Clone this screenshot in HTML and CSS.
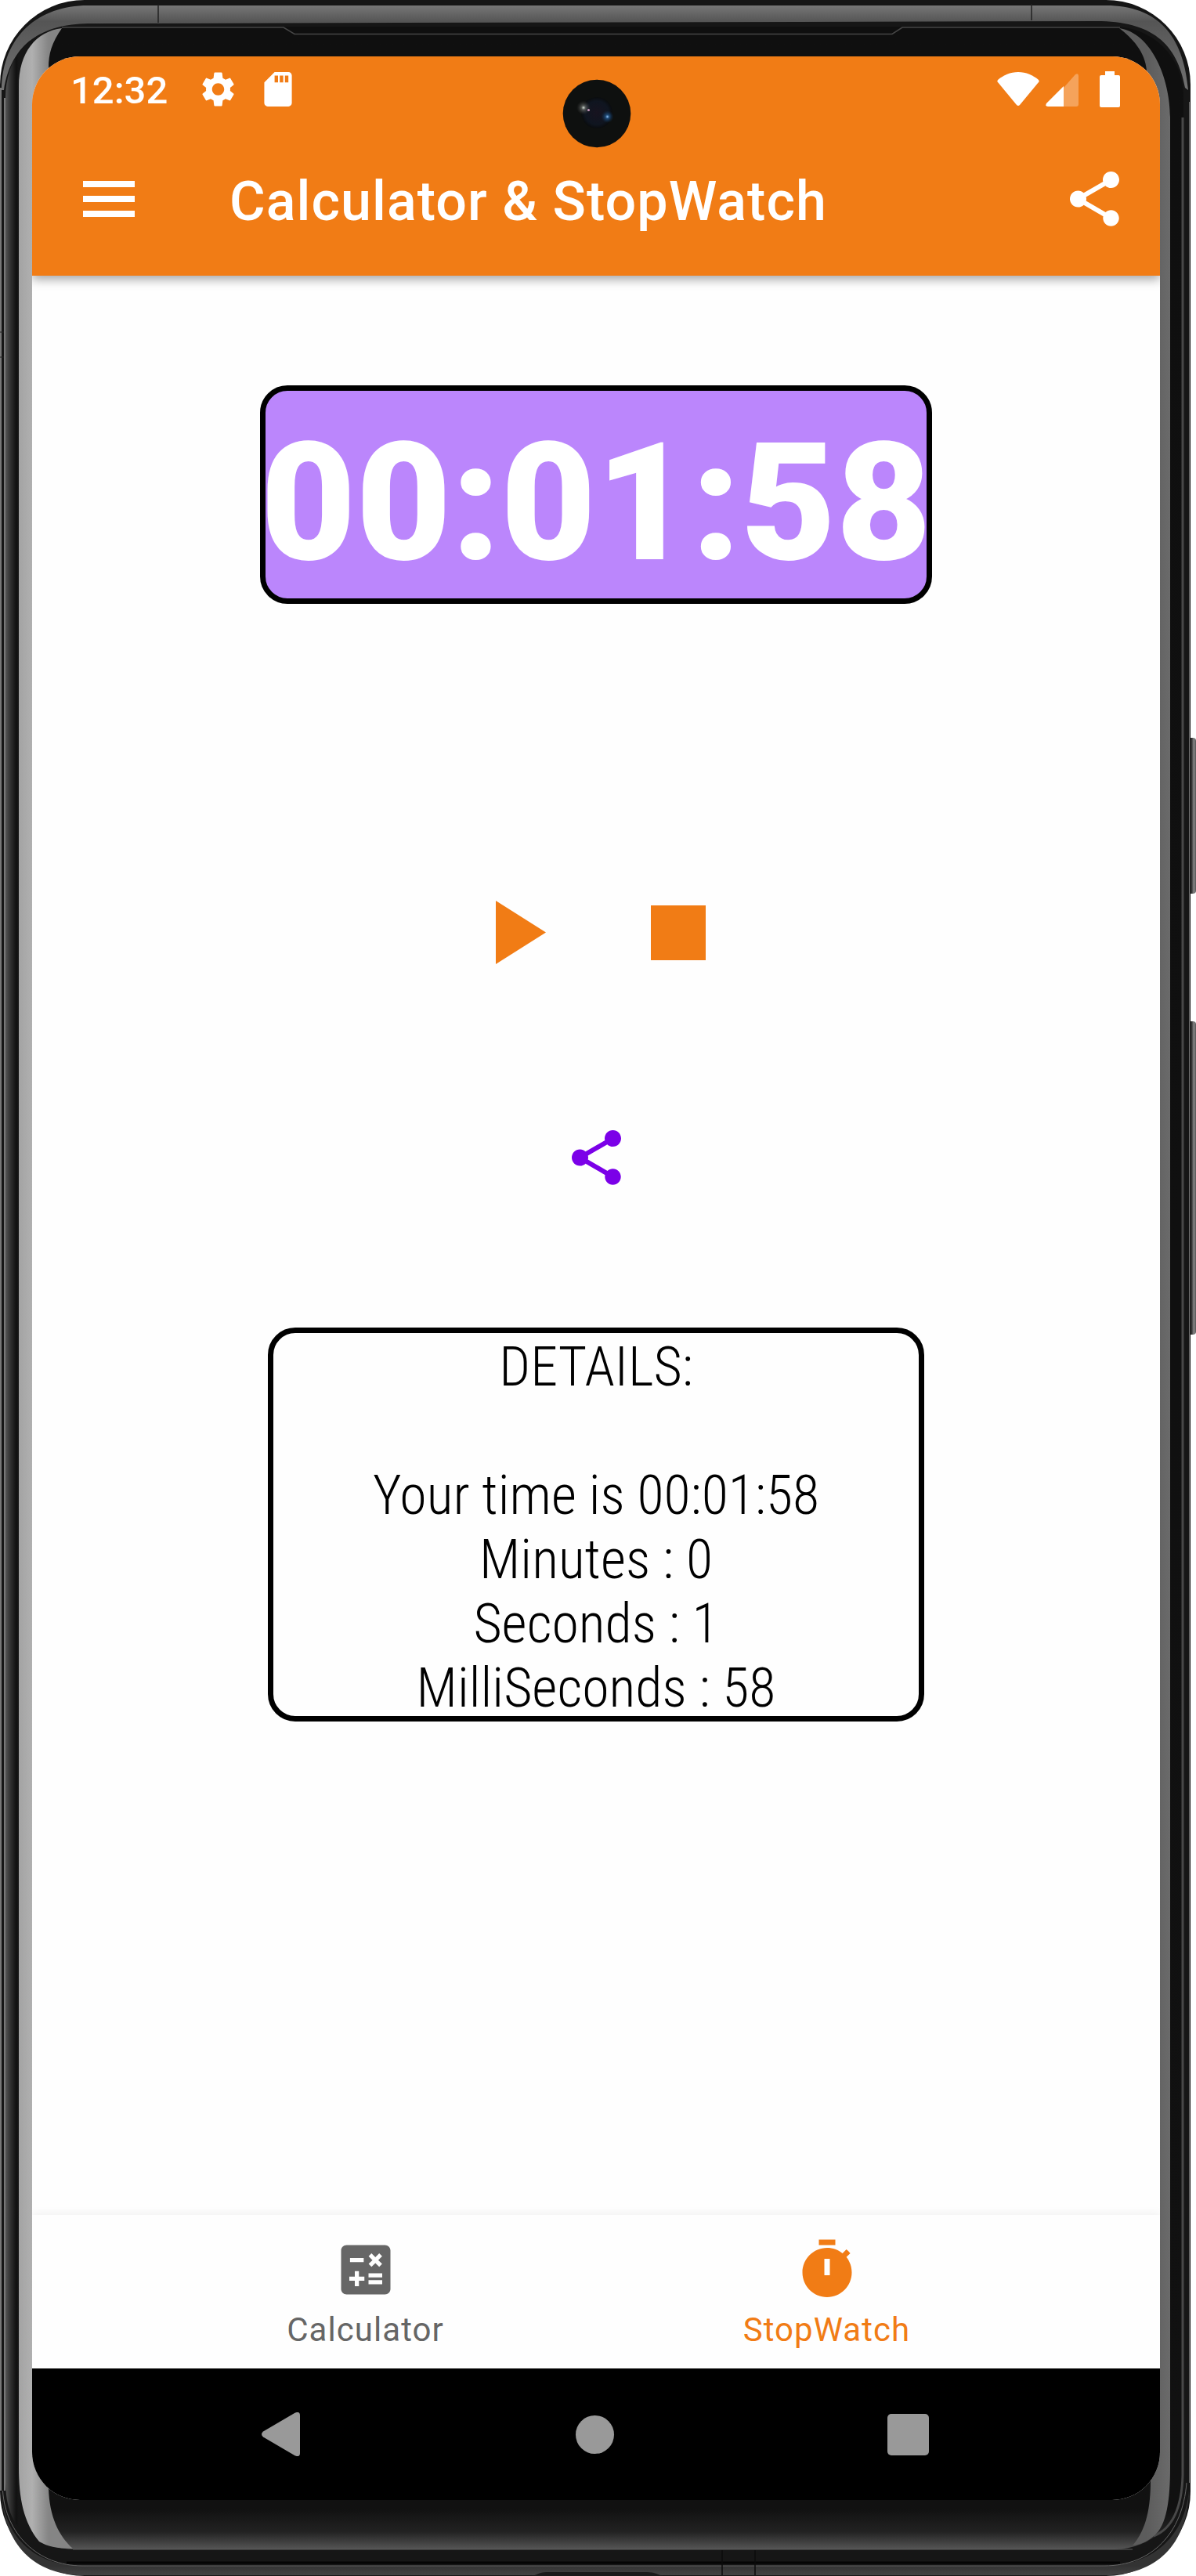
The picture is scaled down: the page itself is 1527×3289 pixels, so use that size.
FILE: index.html
```html
<!DOCTYPE html>
<html lang="en">
<head>
<meta charset="utf-8">
<title>Calculator &amp; StopWatch</title>
<link rel="stylesheet" href="styles.css">
</head>
<body>
<div class="phone">
  <svg class="frame" viewBox="0 0 1527 3289" aria-hidden="true">
    <defs>
      <linearGradient id="metalTop" gradientUnits="userSpaceOnUse" x1="0" y1="6" x2="0" y2="150">
        <stop offset="0" stop-color="#787878"/><stop offset=".15" stop-color="#555"/><stop offset=".5" stop-color="#666"/><stop offset="1" stop-color="#7c7c7c"/>
      </linearGradient>
      <linearGradient id="metalBottom" gradientUnits="userSpaceOnUse" x1="0" y1="3276" x2="0" y2="3289">
        <stop offset="0" stop-color="#333"/><stop offset="1" stop-color="#444"/>
      </linearGradient>
      <linearGradient id="glass" x1="0" y1="0" x2="0" y2="1">
        <stop offset="0" stop-color="#0f0f0f"/><stop offset=".984" stop-color="#111"/><stop offset=".993" stop-color="#222"/><stop offset="1" stop-color="#555"/>
      </linearGradient>
      <linearGradient id="leftEdge" gradientUnits="userSpaceOnUse" x1="7" y1="0" x2="24" y2="0">
        <stop offset="0" stop-color="#555"/><stop offset=".35" stop-color="#333"/><stop offset=".8" stop-color="#111"/><stop offset="1" stop-color="#161616"/>
      </linearGradient>
      <linearGradient id="leftShine" gradientUnits="userSpaceOnUse" x1="24" y1="0" x2="62" y2="0">
        <stop offset="0" stop-color="#a3a3a3"/><stop offset=".45" stop-color="#b0b0b0"/><stop offset="1" stop-color="#858585"/>
      </linearGradient>
      <linearGradient id="rightShine" gradientUnits="userSpaceOnUse" x1="1464" y1="0" x2="1495" y2="0">
        <stop offset="0" stop-color="#5c5c5c"/><stop offset="1" stop-color="#6b6b6b"/>
      </linearGradient>
      <linearGradient id="key" x1="0" y1="0" x2="1" y2="0">
        <stop offset="0" stop-color="#222"/><stop offset=".5" stop-color="#333"/><stop offset=".75" stop-color="#888"/><stop offset="1" stop-color="#555"/>
      </linearGradient>
    </defs>
    <rect x="1516" y="942" width="11" height="199" rx="4" fill="url(#key)"/>
    <rect x="1516" y="1304" width="11" height="400" rx="4" fill="url(#key)"/>
    <rect x="0" y="0" width="1520" height="3289" rx="108" fill="#161616"/>
    <path d="M2 115C3 45 50 7 112 7H1412C1478 7 1511 45 1517 115L1513 112C1503 55 1470 27 1400 27L112 30C55 31 14 55 5 115Z" fill="url(#metalTop)"/>
    <path d="M202 6V29M1317 5V26" stroke="#222" stroke-width="1.5"/>
    <path d="M1 112V3180M6 125V3180" fill="none" stroke="#777" stroke-width="2"/>
    <path d="M0 424H5M0 456H5" stroke="#222"/>
    <path d="M1518.500 130V3170" stroke="#777"/>
    <path d="M2 3180C5 3240 45 3276 105 3276H1410C1475 3276 1513 3235 1518 3180C1516 3250 1476 3288 1411 3288H106C45 3288 4 3250 2 3180Z" fill="url(#metalBottom)"/>
    <path d="M3.500 3180C7 3235 48 3276 105 3276H1410C1470 3276 1510 3235 1515 3170" fill="none" stroke="#666"/>
    <path d="M85 3272H1430" stroke="#050505" stroke-width="3"/>
    <path d="M677 3289C684 3289 688 3284 698 3284H826C836 3284 838 3287 848 3289Z" fill="#1a1a1a"/>
    <path d="M922 3256V3288M964 3256V3288" stroke="#0b0b0b" stroke-width="1.500"/>
    <rect x="7" y="34" width="1504" height="3221" rx="88" fill="url(#glass)"/>
    <path d="M7 125V3170C8 3210 20 3232 50 3245C30 3220 24 3190 24 3150V110C24 75 42 50 79 36C33 42 8 75 7 125Z" fill="url(#leftEdge)"/>
    <path d="M1510 150V3160C1509 3200 1498 3228 1473 3238" fill="none" stroke="#484848" stroke-width="3"/>
    <path d="M24 110C24 67 46 40 79 36C66 55 62 68 62 87V3177C63 3213 75 3238 93 3254C72 3254 60 3251 50 3245C30 3220 24 3190 24 3150Z" fill="url(#leftShine)"/>
    <path d="M1429 36C1470 42 1494 100 1494 150V3150C1494 3190 1490 3225 1473 3238C1466 3244 1457 3249 1446 3250C1464 3230 1469 3200 1469 3168L1464 90C1462 66 1446 49 1429 36Z" fill="url(#rightShine)"/>
    <path d="M79 35H362L376 43.500H1139L1152 35H1430" fill="none" stroke="#464646" stroke-width="1.500"/>
    <path d="M93 3255H1446" stroke="#5c5c5c"/>
  </svg>

  <main class="screen">
    <header class="top">
      <div class="status">
        <span class="clock">12:32</span>
        <svg class="gear" viewBox="2 2 20 20"><path d="M19.140 12.940c.04-.3.06-.61.06-.94 0-.32-.02-.64-.07-.94l2.030-1.580c.18-.14.23-.41.12-.61l-1.920-3.320c-.12-.22-.37-.29-.59-.22l-2.390.96c-.5-.38-1.030-.7-1.620-.94L14.400 2.410c-.04-.24-.24-.41-.48-.41h-3.840c-.24 0-.43.17-.47.41l-.36 2.940c-.59.24-1.130.57-1.620.94l-2.390-.96c-.22-.08-.47 0-.59.22L2.740 8.870c-.12.21-.08.47.12.61l2.030 1.580c-.05.3-.09.63-.09.94s.02.64.07.94l-2.030 1.580c-.18.14-.23.41-.12.61l1.920 3.320c.12.22.37.29.59.22l2.390-.96c.5.38 1.030.7 1.620.94l.36 2.940c.05.24.24.41.48.41h3.840c.24 0 .44-.17.47-.41l.36-2.940c.59-.24 1.130-.56 1.620-.94l2.390.96c.22.08.47 0 .59-.22l1.920-3.320c.12-.22.07-.47-.12-.61l-2.010-1.580zM12 15.600c-1.980 0-3.600-1.620-3.600-3.600s1.620-3.600 3.600-3.600 3.600 1.620 3.600 3.600-1.620 3.600-3.600 3.600z"/></svg>
        <svg class="sdcard" viewBox="4 2 16 20"><path d="M18 2h-8L4.020 8 4 20c0 1.100.9 2 2 2h12c1.100 0 2-.9 2-2V4c0-1.100-.9-2-2-2zm-6 6h-2V4h2v4zm3 0h-2V4h2v4zm3 0h-2V4h2v4z"/></svg>
        <span class="spacer"></span>
        <svg class="wifi" viewBox="0 0 54 44"><path d="M27 0C17 0 8 4 1 10Q0 11 .6 12.500L25 42Q27 44 29 42L53.400 12.500Q54 11 53 10C46 4 37 0 27 0Z"/></svg>
        <svg class="signal" viewBox="0 0 42 42"><path opacity=".3" d="M38 1Q42-1 42 3V39Q42 42 39 42H23V18Z"/><path d="M23 16V42H3Q-1 42 1 38Z"/></svg>
        <svg class="battery" viewBox="0 0 26 46"><path d="M7 0H19V5H24Q26 5 26 7V44Q26 46 24 46H2Q0 46 0 44V7Q0 5 2 5H7Z"/></svg>
      </div>
      <div class="appbar">
        <svg class="menu" viewBox="0 0 66 46"><path d="M0 0H66V8H0ZM0 19H66V27H0ZM0 38H66V46H0Z"/></svg>
        <h1 class="title">Calculator &amp; StopWatch</h1>
        <svg class="share" viewBox="3 2 18 20"><path d="M18 16.080c-.76 0-1.440.3-1.960.77L8.910 12.700c.05-.23.09-.46.09-.7s-.04-.47-.09-.7l7.050-4.110c.54.5 1.250.81 2.040.81 1.660 0 3-1.340 3-3s-1.340-3-3-3-3 1.340-3 3c0 .24.04.47.09.7L8.040 9.810C7.500 9.310 6.790 9 6 9c-1.660 0-3 1.340-3 3s1.340 3 3 3c.79 0 1.500-.31 2.040-.81l7.120 4.160c-.05.21-.08.43-.08.65 0 1.610 1.310 2.920 2.920 2.920s2.920-1.310 2.920-2.920-1.310-2.920-2.920-2.920z"/></svg>
      </div>
      <svg class="camera" viewBox="0 0 88 88">
        <defs><radialGradient id="lens"><stop offset="0" stop-color="#17131f"/><stop offset=".75" stop-color="#0f1520"/><stop offset="1" stop-color="#0a0c0e"/></radialGradient>
        <radialGradient id="glint"><stop offset="0" stop-color="#dde5dd"/><stop offset=".3" stop-color="#6c706c" stop-opacity=".7"/><stop offset="1" stop-color="#333" stop-opacity="0"/></radialGradient>
        <radialGradient id="blue"><stop offset="0" stop-color="#9cf"/><stop offset=".3" stop-color="#258" stop-opacity=".8"/><stop offset="1" stop-color="#135" stop-opacity="0"/></radialGradient></defs>
        <circle cx="44" cy="44" r="43.300" fill="#0e100f"/><circle cx="44" cy="43" r="20" fill="url(#lens)"/>
        <circle cx="27" cy="36.500" r="9" fill="url(#glint)"/><circle cx="57.500" cy="48" r="8" fill="url(#blue)"/><circle cx="33.500" cy="39.500" r="1.500" fill="#c698bc"/>
      </svg>
    </header>

    <section class="content">
      <div class="timer"><span>00:01:58</span></div>
      <div class="controls">
        <svg class="play" viewBox="0 0 64 81"><path d="M0 0V81L64 40.500Z"/></svg>
        <svg class="stop" viewBox="0 0 70 70"><path d="M0 0H70V70H0Z"/></svg>
      </div>
      <svg class="share share-result" viewBox="3 2 18 20"><path d="M18 16.080c-.76 0-1.440.3-1.960.77L8.910 12.700c.05-.23.09-.46.09-.7s-.04-.47-.09-.7l7.050-4.110c.54.5 1.250.81 2.040.81 1.660 0 3-1.340 3-3s-1.340-3-3-3-3 1.340-3 3c0 .24.04.47.09.7L8.040 9.810C7.500 9.310 6.790 9 6 9c-1.660 0-3 1.340-3 3s1.340 3 3 3c.79 0 1.500-.31 2.040-.81l7.120 4.160c-.05.21-.08.43-.08.65 0 1.610 1.310 2.920 2.920 2.920s2.920-1.310 2.920-2.920-1.310-2.920-2.920-2.920z"/></svg>
      <div class="details">
        <p>DETAILS:</p>
        <p>&nbsp;</p>
        <p>Your time is 00:01:58</p>
        <p>Minutes : 0</p>
        <p>Seconds : 1</p>
        <p>MilliSeconds : 58</p>
      </div>
    </section>

    <nav class="tabs">
      <a class="tab">
        <svg viewBox="0 0 24 24"><path d="M19 3H5c-1.100 0-2 .9-2 2v14c0 1.100.9 2 2 2h14c1.100 0 2-.9 2-2V5c0-1.100-.9-2-2-2zm-5.970 4.060L14.090 6l1.410 1.410L16.910 6l1.060 1.060-1.410 1.410 1.410 1.410-1.060 1.060-1.410-1.400-1.410 1.410-1.060-1.060 1.410-1.410-1.410-1.420zM6.250 7.720h5v1.500h-5v-1.500zM11.500 16h-2v2H8v-2H6v-1.500h2v-2h1.500v2h2V16zm6.500 1.250h-5v-1.500h5v1.500zm0-2.500h-5v-1.500h5v1.500z"/></svg>
        <span>Calculator</span>
      </a>
      <a class="tab active">
        <svg viewBox="0 0 24 24"><path fill-rule="evenodd" d="M15 1H9v2h6V1zm-4 13h2V8h-2v6zm8.030-6.610l1.420-1.420c-.43-.51-.9-.99-1.410-1.410l-1.420 1.420C16.070 4.740 14.120 4 12 4c-4.970 0-9 4.030-9 9s4.020 9 9 9 9-4.030 9-9c0-2.120-.74-4.070-1.970-5.610z"/></svg>
        <span>StopWatch</span>
      </a>
    </nav>

    <div class="sysnav">
      <svg class="back" viewBox="0 0 49 56"><path d="M42.500.8Q49-2 49 4V52Q49 58 42.500 55.200L2 31.500Q-2 28 2 24.500Z"/></svg>
      <span class="home"></span>
      <span class="recent"></span>
    </div>
  </main>
</div>
</body>
</html>
```

FILE: styles.css
```css
* { box-sizing: border-box; }

body {
  margin: 0;
  background: #fff;
  font-family: Roboto, "Liberation Sans", sans-serif;
}

svg { display: block; flex: none; fill: currentColor; }

.phone {
  display: grid;
  width: 1527px;
  height: 3289px;
  overflow: hidden;
}

.frame, .screen { grid-area: 1 / 1; }
.frame { width: 1527px; height: 3289px; }

.screen {
  z-index: 1;
  display: flex;
  flex-direction: column;
  width: 1440px;
  height: 3120px;
  margin: 72px 0 0 41px;
  overflow: hidden;
  border-radius: 61px;
  background: #fefefe;
}

/* Status bar and app bar */
.top {
  position: relative;
  z-index: 1;
  height: 280px;
  background: #f17c15;
  color: #fff;
  box-shadow: 0 5px 12px rgba(0, 0, 0, .34);
}

.status {
  display: flex;
  align-items: center;
  height: 84px;
  padding: 0 51px 0 49px;
}

.clock {
  width: 167px;
  padding-top: 4px;
  font-size: 49px;
  font-weight: 500;
  line-height: 56px;
}
.gear { width: 43px; height: 44px; }
.sdcard { width: 36px; height: 44px; margin-left: 37px; }
.spacer { flex: 1; }
.wifi { width: 54px; height: 44px; }
.signal { width: 42px; height: 42px; margin-left: 8px; margin-top: 2px; }
.battery { width: 26px; height: 46px; margin-left: 27px; }

.appbar {
  display: flex;
  align-items: center;
  height: 196px;
  padding: 0 52px 0 65px;
}
.menu { width: 66px; height: 46px; }
.title {
  flex: 1;
  margin: 0 0 0 121px;
  padding-top: 6px;
  font-size: 70px;
  font-weight: 500;
  letter-spacing: 1.050px;
  line-height: 84px;
}
.share { width: 63px; height: 70px; }

.camera {
  position: absolute;
  left: 676.5px;
  top: 28.5px;
  width: 88px;
  height: 88px;
}

/* Stopwatch */
.content {
  flex: 1;
  display: flex;
  flex-direction: column;
  align-items: center;
  padding-top: 140px;
}

.timer {
  display: flex;
  justify-content: center;
  width: 858px;
  height: 279px;
  padding-top: 20px;
  border: 7px solid #000;
  border-radius: 35px;
  background: #bb86fc;
  color: #fff;
  font-size: 210px;
  font-weight: 900;
  line-height: 246px;
  white-space: nowrap;
}

.controls {
  display: flex;
  align-items: center;
  gap: 134px;
  margin: 379px 0 0 12px;
  color: #f17c15;
}
.play { width: 64px; height: 81px; }
.stop { width: 70px; height: 70px; }

.share-result { margin-top: 212px; color: #7b00e8; }

.details {
  width: 838px;
  height: 503px;
  margin-top: 182px;
  padding-top: 2px;
  border: 7px solid #000;
  border-radius: 35px;
  color: #000;
  font-family: "Roboto Condensed", Roboto, "Liberation Sans Narrow", sans-serif;
  font-stretch: 75%;
  font-size: 70px;
  font-weight: 300;
  line-height: 82.040px;
  text-align: center;
  white-space: nowrap;
}
.details p { margin: 0; }

/* Bottom navigation */
.tabs {
  display: flex;
  justify-content: center;
  height: 196px;
  background: #fefefe;
  box-shadow: 0 -3px 10px rgba(0, 0, 0, .05);
}
.tab {
  display: flex;
  flex-direction: column;
  align-items: center;
  width: 589px;
  padding-top: 28px;
  color: #666;
  font-size: 42px;
  letter-spacing: 1.050px;
  line-height: 48px;
}
.tab svg { width: 84px; height: 84px; margin-bottom: 11px; }
.active { color: #f17c15; }

.sysnav {
  display: flex;
  justify-content: space-between;
  align-items: center;
  height: 168px;
  padding: 0 295px 0 293px;
  background: #000;
  color: #999;
}
.back { width: 49px; height: 56px; }
.home { width: 49px; height: 49px; margin-left: 3px; border-radius: 50%; background: #999; }
.recent { width: 53px; height: 53px; border-radius: 5px; background: #999; }
```
